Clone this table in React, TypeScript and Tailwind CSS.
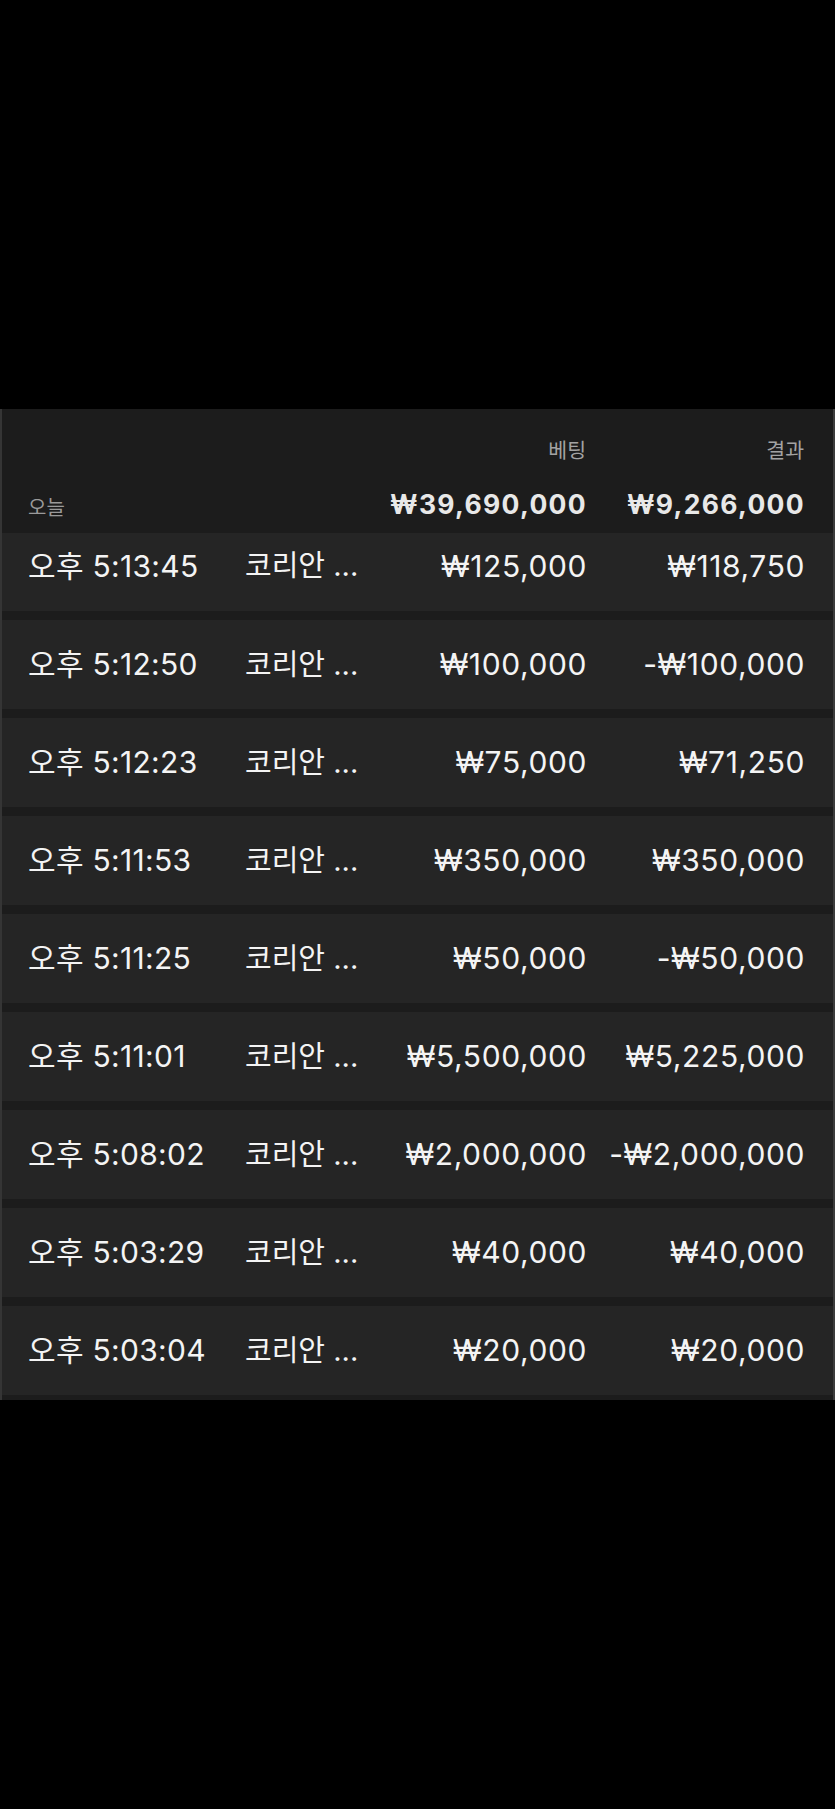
import React from "react";

const rows = [
  ["오후 5:13:45", "₩125,000", "₩118,750"],
  ["오후 5:12:50", "₩100,000", "-₩100,000"],
  ["오후 5:12:23", "₩75,000", "₩71,250"],
  ["오후 5:11:53", "₩350,000", "₩350,000"],
  ["오후 5:11:25", "₩50,000", "-₩50,000"],
  ["오후 5:11:01", "₩5,500,000", "₩5,225,000"],
  ["오후 5:08:02", "₩2,000,000", "-₩2,000,000"],
  ["오후 5:03:29", "₩40,000", "₩40,000"],
  ["오후 5:03:04", "₩20,000", "₩20,000"],
];

const font = { fontFamily: 'Inter, "Noto Sans CJK KR", sans-serif' };

export default function App() {
  return (
    <div className="w-[835px] min-h-[1809px] bg-black" style={font}>
      <div className="h-[409px]" />
      <div className="border-l-2 border-r-2 border-l-[#353535] border-r-[#3c3c3c] bg-[#1c1c1c] pb-[5px]">
        <div className="h-[124px] pl-[26px] pr-[27px] grid grid-cols-[217px_141px_200px_218px]">
          <div className="flex flex-col justify-end pb-[15px]">
            <span className="text-[20px] leading-none text-[#9a9a9a]">오늘</span>
          </div>
          <div />
          <div className="flex flex-col items-end">
            <span className="mt-[32px] text-[20.5px] leading-none text-[#a3a3a3]">베팅</span>
            <span className="mt-[29px] text-[26.5px] leading-none font-bold tracking-[0.05em] -mr-[1px] text-[#e8e8e8]">₩39,690,000</span>
          </div>
          <div className="flex flex-col items-end">
            <span className="mt-[32px] text-[20.5px] leading-none text-[#a3a3a3]">결과</span>
            <span className="mt-[29px] text-[26.5px] leading-none font-bold tracking-[0.05em] -mr-[1px] text-[#e8e8e8]">₩9,266,000</span>
          </div>
        </div>
        <div className="flex flex-col gap-[9px]">
          {rows.map((r, i) => (
            <div
              key={i}
              className={
                "bg-[#252525] pl-[26px] pr-[27px] grid grid-cols-[217px_141px_200px_218px] items-center text-[30px] text-[#f4f4f4] " +
                (i === 0 ? "h-[78px] pb-[12px]" : "h-[89px]")
              }
            >
              <span className="whitespace-nowrap tracking-[0.01em]">{r[0]}</span>
              <span className="whitespace-nowrap text-[29px]">코리안 ...</span>
              <span className="text-right whitespace-nowrap tracking-[0.02em] -mr-[1px]">{r[1]}</span>
              <span className="text-right whitespace-nowrap tracking-[0.02em] -mr-[1px]">{r[2]}</span>
            </div>
          ))}
        </div>
      </div>
    </div>
  );
}
